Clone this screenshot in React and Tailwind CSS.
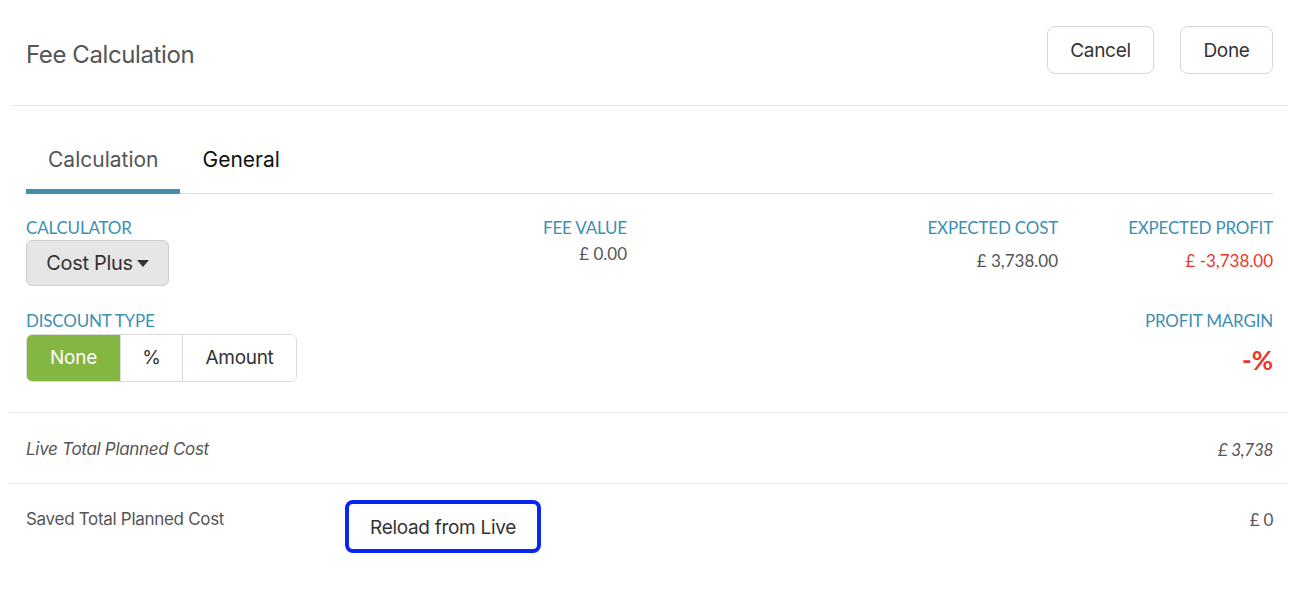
import React, { useState } from 'react';

const label = "font-['Lato',sans-serif] text-[17px] leading-[20px] tracking-[-0.2px] uppercase text-[#3d8fb3]";
const num = "font-['Lato',sans-serif] text-[17px] leading-[22px]";

export default function App() {
  const [tab, setTab] = useState('calc');
  const [discount, setDiscount] = useState('none');

  const tabClass = (active) =>
    `px-[22px] pb-[14px] pt-[3px] text-[21px] leading-[30px] tracking-[0px] -mb-px border-b-[5px] ${active ? 'border-[#428fb0] text-[#555]' : 'border-transparent text-[#111]'}`;
  const segClass = (active) => (active ? 'bg-[#84b642] text-white' : 'bg-white text-[#333]');

  return (
    <div className="min-h-screen bg-white pl-[10px] pr-[6px] font-['Inter',sans-serif] text-[#333]">
      {/* Header */}
      <div className="flex items-center justify-between pl-4 pr-[15px] pt-[26px] pb-[31px] border-b border-[#e8e8e8]">
        <h1 className="text-[24px] leading-[32px] text-[#555] tracking-[-0.4px] mt-[10px]">Fee Calculation</h1>
        <div className="flex gap-[26px]">
          <button className="h-[48px] w-[107px] rounded-[8px] border border-[#d6d6d6] bg-white text-[19px] text-[#333] tracking-[-0.3px] pt-[2px]">Cancel</button>
          <button className="h-[48px] w-[93px] rounded-[8px] border border-[#d6d6d6] bg-white text-[19px] text-[#333] tracking-[-0.3px] pt-[2px]">Done</button>
        </div>
      </div>

      <div className="pl-4 pr-[15px]">
        {/* Tabs */}
        <div className="flex mt-[36px] border-b border-[#dcdcdc]">
          <button onClick={() => setTab('calc')} className={tabClass(tab === 'calc')}>Calculation</button>
          <button onClick={() => setTab('gen')} className={tabClass(tab === 'gen')}>General</button>
        </div>

        {/* Figures */}
        <div className="grid grid-cols-[601px_431px_1fr] pt-[24px]">
          <div className="flex justify-between">
            <div>
              <div className={label}>Calculator</div>
              <button className="mt-[2px] h-[46px] w-[143px] rounded-[6px] border border-[#cfcfcf] bg-[#e6e6e6] text-[20px] text-[#333] tracking-[-0.3px] flex items-center justify-center gap-[4px]">
                Cost Plus
                <svg width="12" height="7" viewBox="0 0 12 7"><path d="M0 0h12L6 7z" fill="#333" /></svg>
              </button>
            </div>
            <div className="text-right">
              <div className={label}>Fee Value</div>
              <div className={`${num} text-[#555] mt-[5px]`}>£ 0.00</div>
            </div>
          </div>
          <div className="text-right">
            <div className={label}>Expected Cost</div>
            <div className={`${num} text-[#555] mt-[12px]`}>£ 3,738.00</div>
          </div>
          <div className="text-right">
            <div className={label}>Expected Profit</div>
            <div className={`${num} text-[#e8382e] mt-[12px]`}>£ -3,738.00</div>
          </div>
        </div>

        <div className="flex justify-between pt-[25px] pb-[30px]">
          <div>
            <div className={label}>Discount Type</div>
            <div className="mt-[3px] flex h-[48px] rounded-[6px] border border-[#dcdcdc] overflow-hidden text-[19px] tracking-[-0.3px]">
              <button onClick={() => setDiscount('none')} className={`w-[93px] ${segClass(discount === 'none')}`}>None</button>
              <button onClick={() => setDiscount('pct')} className={`w-[62px] border-l border-[#dcdcdc] ${segClass(discount === 'pct')}`}>%</button>
              <button onClick={() => setDiscount('amt')} className={`w-[114px] border-l border-[#dcdcdc] ${segClass(discount === 'amt')}`}>Amount</button>
            </div>
          </div>
          <div className="text-right">
            <div className={label}>Profit Margin</div>
            <div className="font-['Lato',sans-serif] text-[26px] leading-[30px] font-bold text-[#e8382e] mt-[14px]">-%</div>
          </div>
        </div>
      </div>

      {/* Totals */}
      <div className="border-t border-[#e8e8e8] flex justify-between items-center pl-4 pr-[15px] pt-[3px] h-[71px] italic text-[17px] text-[#555] tracking-[-0.3px]">
        <span>Live Total Planned Cost</span>
        <span className="font-['Lato',sans-serif]">£ 3,738</span>
      </div>
      <div className="border-t border-[#ececec] flex justify-between items-start pl-4 pr-[15px] pt-[23px] text-[17px] text-[#555] tracking-[-0.3px]">
        <div className="flex items-start">
          <span className="w-[319px]">Saved Total Planned Cost</span>
          <button className="-mt-[7px] h-[53px] w-[196px] pt-[4px] rounded-[8px] border-[4px] border-[#0a24f5] bg-white text-[19px] text-[#333]">Reload from Live</button>
        </div>
        <span className="font-['Lato',sans-serif]">£ 0</span>
      </div>
    </div>
  );
}
